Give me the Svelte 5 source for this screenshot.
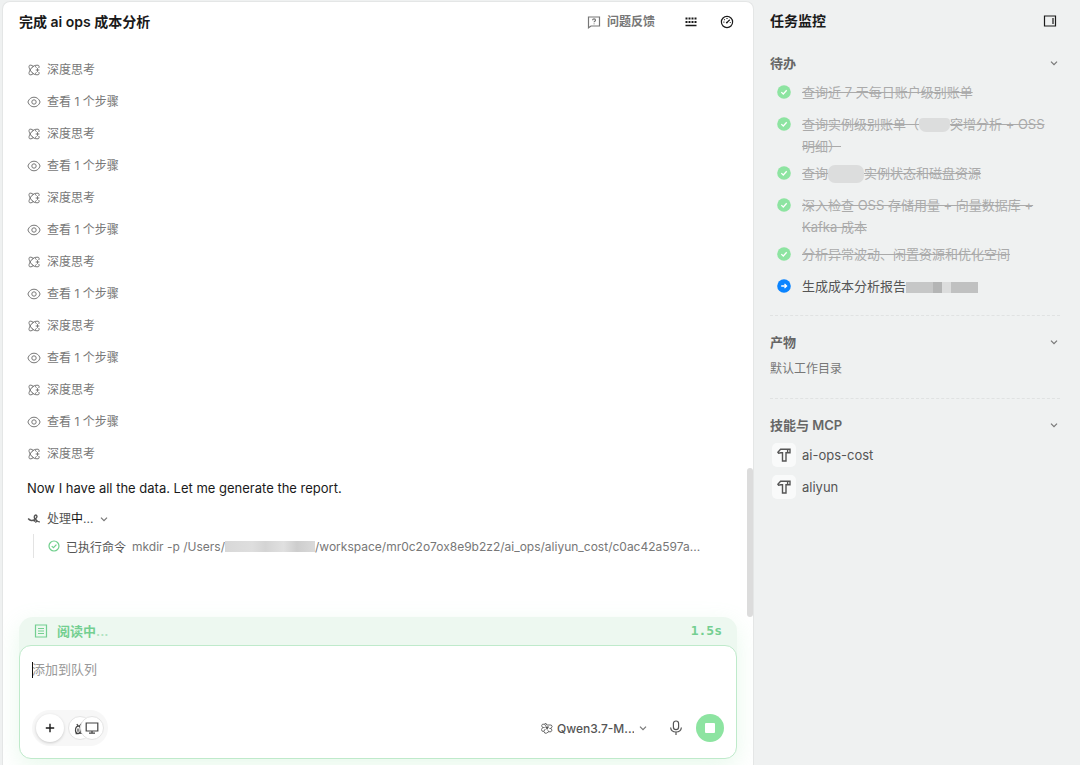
<script lang="ts">
  type TodoState = "done" | "active";

  interface TodoPart {
    text?: string;
    mask?: "small" | "medium" | "wide";
  }

  interface Todo {
    state: TodoState;
    parts: TodoPart[];
  }

  const steps = Array.from({ length: 13 }, (_, i) =>
    i % 2 === 0 ? "think" : "view",
  );

  const todos: Todo[] = [
    { state: "done", parts: [{ text: "查询近 7 天每日账户级别账单" }] },
    {
      state: "done",
      parts: [
        { text: "查询实例级别账单（" },
        { mask: "small" },
        { text: "突增分析 + OSS " },
        { text: "明细）" },
      ],
    },
    {
      state: "done",
      parts: [{ text: "查询" }, { mask: "medium" }, { text: "实例状态和磁盘资源" }],
    },
    {
      state: "done",
      parts: [{ text: "深入检查 OSS 存储用量 + 向量数据库 + Kafka 成本" }],
    },
    { state: "done", parts: [{ text: "分析异常波动、闲置资源和优化空间" }] },
    { state: "active", parts: [{ text: "生成成本分析报告" }, { mask: "wide" }] },
  ];

  const skills = ["ai-ops-cost", "aliyun"];

  let draft = $state("");
  let model = $state("qwen");
</script>

{#snippet chevron()}
  <svg class="chevron" viewBox="0 0 10 10" aria-hidden="true">
    <path d="M2 3.6 5 6.6 8 3.6" />
  </svg>
{/snippet}

<div class="app">
  <main class="panel">
    <header class="topbar">
      <h1>完成 ai ops 成本分析</h1>
      <div class="actions">
        <button class="feedback" type="button">
          <svg class="icon" viewBox="0 0 14 14" aria-hidden="true">
            <path d="M1.5 2h11v9H4L1.5 12.800z" />
            <path d="M5.6 5.2c0-1.8 2.9-1.7 2.9 0 0 1-1.4 1-1.4 2.1M7.1 8.4v.9" />
          </svg>
          <span>问题反馈</span>
        </button>
        <button class="icon-btn" type="button" aria-label="快捷键">
          <svg class="icon" viewBox="0 0 14 14" aria-hidden="true">
            <path class="dots" d="M1.5 3.5h12M1.5 7h12" />
            <path class="heavy" d="M1.5 10.5h11" />
          </svg>
        </button>
        <button class="icon-btn" type="button" aria-label="用量">
          <svg class="icon" viewBox="0 0 14 14" aria-hidden="true">
            <circle cx="7" cy="7" r="5.6" />
            <path d="M6.8 7.6 9.8 4.8M3.4 7.2h1M7 3v1M4.2 4.4l.6.6M9.8 7.5h.9" />
            <circle class="solid" cx="6.8" cy="7.6" r=".9" />
          </svg>
        </button>
      </div>
    </header>

    <section class="thread">
      <ul class="steps">
        {#each steps as step}
          <li>
            {#if step === "think"}
              <svg class="step-icon" viewBox="0 0 14 14" aria-hidden="true">
                <path
                  d="M6.5 3.500C5 2 2.500 1.700 2.200 2.700c-.5 1.300 0 2.600 1 4.300-1 1.700-1.500 3-1 4.300.4 1 2.800.7 4.300-.8M5 4.700C5.500 3.200 8 2 11 2.200c1.200.2 1.400 1.300.8 2.800M5 9.300c.5 1.500 3 2.700 6 2.500 1.200-.2 1.400-1.300.8-2.800M6.500 3.500C4.800 4.400 3.800 5.500 3.200 7c.6 1.500 1.600 2.600 3.300 3.500M8 3.300 9.600 4.600M8 10.700 9.600 9.400M10.500 5.200v3.600M8.700 7h3.600"
                />
              </svg>
              <span>深度思考</span>
            {:else}
              <svg class="step-icon" viewBox="0 0 14 14" aria-hidden="true">
                <path d="M.9 7C2 3.800 4.300 2.200 7 2.200S12 3.800 13.100 7C12 10.200 9.700 11.800 7 11.800S2 10.200.9 7z" />
                <circle cx="7" cy="7" r="2.200" />
              </svg>
              <span>查看 1 个步骤</span>
            {/if}
          </li>
        {/each}
      </ul>

      <p class="message">Now I have all the data. Let me generate the report.</p>

      <button class="processing" type="button" aria-expanded="true">
        <svg class="step-icon" viewBox="0 0 14 14" aria-hidden="true">
          <path
            class="bold"
            d="M1.200 6.500C2.700 8.800 5.500 9 7.600 7.600c2.200-1.500 2.900-3.300 2-4.200-.9-.8-2.400.1-2.300 1.900 0 .9.400 1.500 1 1.800M7.300 9.800c0-1.700 1.200-2.500 2-1.900.9.700-.1 2.300-1.100 2M9.400 8c.8 1.400 1.800 2 3.500 1.900"
          />
        </svg>
        <span>处理<b>中</b>...</span>
        {@render chevron()}
      </button>

      <div class="command">
        <svg class="check-icon" viewBox="0 0 12 12" aria-hidden="true">
          <circle cx="6" cy="6" r="5" />
          <path d="M3.700 6.100 5.500 7.700 8.400 4.600" />
        </svg>
        <span class="command-label">已执行命令</span>
        <code>
          <span>mkdir -p /Users/</span><span class="path-mask"></span><span
            >/workspace/mr0c2o7ox8e9b2z2/ai_ops/aliyun_cost/c0ac42a597a...</span>
        </code>
      </div>
      <div class="scroll-thumb"></div>
    </section>

    <form class="composer" onsubmit={(e) => e.preventDefault()}>
      <div class="status" role="status">
        <svg class="icon" viewBox="0 0 14 14" aria-hidden="true">
          <path d="M1.500 1h11v12h-11zM4 4.500h6M4 7h6M4 9.500h6" />
        </svg>
        <span class="status-text">阅读中<i>...</i></span>
        <span class="elapsed">1.5s</span>
      </div>
      <div class="input-box">
        <div class="entry">
          <textarea
            bind:value={draft}
            rows="2"
            placeholder="添加到队列"
            aria-label="添加到队列"
          ></textarea>
          <span class="caret"></span>
        </div>
        <div class="toolbar">
          <div class="tools">
            <button class="add" type="button" aria-label="添加">
              <svg viewBox="0 0 10 10" aria-hidden="true">
                <path d="M5 .8v8.400M.8 5h8.400" />
              </svg>
            </button>
            <div class="stack">
              <button type="button" aria-label="技能">
                <svg viewBox="0 0 14 14" aria-hidden="true">
                  <path
                    d="M5.500 5.200C3.800 5.200 2.500 7 2.500 9.300S3.700 12.600 5 12.600 7.500 11.400 7.500 9.300 6.700 5.200 5.500 5.200zM7.300 6v5.400c0 .8.700 1.200 1.600 1M6.300 5.200 9.500 1.600M3.800 3.200 5.500 5.200M5 7.500v3.300M2.600 12.600h2"
                  />
                </svg>
              </button>
              <button type="button" aria-label="本机">
                <svg viewBox="0 0 14 14" aria-hidden="true">
                  <path d="M1.200 2h11.600v8H1.200zM7 10v2.200M4 12.200h6" />
                </svg>
              </button>
            </div>
          </div>
          <div class="send-tools">
            <label class="model">
              <svg class="model-logo" viewBox="0 0 14 14" aria-hidden="true">
                <path
                  d="M5.400 1.200 6.700 3.500H12l1 1.800-1.300 2.200 1.100 2-1.100 1.900H9L6.400 13H4.500L3.300 10.900 1.300 10.700.5 8.800 1.900 6.500.7 4.400l1-1.800H4.300zM4.300 2.600 5.400 4.600M1.900 6.500h2.400M3.300 10.900 5 8.200M11.700 7.500H9.800M9 11.400 8 9.600"
                />
                <path class="solid" d="M4.700 5.200h4.800L7.100 9.400z" />
              </svg>
              <select bind:value={model} aria-label="模型">
                <option value="qwen">Qwen3.7-M...</option>
              </select>
              {@render chevron()}
            </label>
            <button class="mic" type="button" aria-label="语音输入">
              <svg viewBox="0 0 16 16" aria-hidden="true">
                <rect x="5.400" y="1" width="5.200" height="8.600" rx="2.600" />
                <path d="M2.600 7.500C2.900 10.400 5 12 8 12s5.100-1.600 5.400-4.500M8 12v3" />
              </svg>
            </button>
            <button class="stop" type="button" aria-label="停止">
              <span></span>
            </button>
          </div>
        </div>
      </div>
    </form>
  </main>

  <aside class="monitor">
    <header class="monitor-head">
      <h2>任务监控</h2>
      <button class="icon-btn" type="button" aria-label="收起侧栏">
        <svg class="icon" viewBox="0 0 14 14" aria-hidden="true">
          <path d="M1.500 2h11v10h-11zM10 4v6" />
        </svg>
      </button>
    </header>

    <section class="group">
      <button class="group-head" type="button" aria-expanded="true">
        <span>待办</span>
        {@render chevron()}
      </button>
      <ul class="todos">
        {#each todos as todo}
          <li class={todo.state}>
            <svg class="todo-icon" viewBox="0 0 14 14" aria-hidden="true">
              <circle cx="7" cy="7" r="6.800" />
              {#if todo.state === "done"}
                <path d="M4.300 7.100 6.300 9 9.700 5.300" />
              {:else}
                <path d="M4.200 7h5.400M7.500 4.900 9.600 7 7.500 9.100" />
              {/if}
            </svg>
            <span class="todo-text">
              {#each todo.parts as part}{#if part.mask}<span class={`mask ${part.mask}`}></span>{:else}<span>{part.text}</span>{/if}{/each}
            </span>
          </li>
        {/each}
      </ul>
    </section>

    <section class="group outputs">
      <button class="group-head" type="button" aria-expanded="true">
        <span>产物</span>
        {@render chevron()}
      </button>
      <p class="workdir">默认工作目录</p>
    </section>

    <section class="group">
      <button class="group-head" type="button" aria-expanded="true">
        <span>技能与 MCP</span>
        {@render chevron()}
      </button>
      <ul class="skills">
        {#each skills as skill}
          <li>
            <span class="skill-icon">
              <svg viewBox="0 0 14 14" aria-hidden="true">
                <path d="M.9 4.200 3.600 1.200H13v3.600H9V13H5.500V4.800H3.800L1.600 5.200zM10.600 1.200v3.600" />
              </svg>
            </span>
            <span>{skill}</span>
          </li>
        {/each}
      </ul>
    </section>
  </aside>
</div>

<style>
  :global(body) {
    background: #eff1f1;
  }
  .app {
    display: grid;
    grid-template-columns: minmax(0, 1fr) 326px;
    min-height: 100vh;
    box-sizing: border-box;
    padding: 1px 0 0 2px;
    font-family: Inter, "Noto Sans CJK SC", sans-serif;
    font-size: 13px;
    color: #1a1a1a;
  }
  h1,
  h2,
  p,
  ul {
    margin: 0;
    padding: 0;
    list-style: none;
  }
  button,
  select,
  textarea {
    margin: 0;
    padding: 0;
    border: 0;
    background: none;
    font: inherit;
    color: inherit;
  }
  svg {
    display: block;
    flex: none;
    fill: none;
    stroke: currentColor;
    stroke-width: 1.2;
  }
  svg .solid {
    fill: currentColor;
    stroke: none;
  }
  .icon {
    width: 14px;
    height: 14px;
  }
  .chevron {
    width: 10px;
    height: 10px;
    color: #777;
  }
  .dots {
    stroke-width: 2;
    stroke-dasharray: 2 1;
  }
  .heavy {
    stroke-width: 1.6;
  }

  .panel {
    display: flex;
    flex-direction: column;
    box-sizing: border-box;
    border: 1px solid #e4e6e6;
    border-bottom: 0;
    border-radius: 8px 8px 0 0;
    background: #fff;
    overflow: hidden;
  }
  .topbar {
    display: flex;
    align-items: center;
    justify-content: space-between;
    height: 40px;
    padding: 0 19px 0 16px;
  }
  h1,
  h2 {
    font-size: 14px;
    line-height: 20px;
    font-weight: 600;
  }
  .actions {
    display: flex;
    align-items: center;
    gap: 22px;
  }
  .feedback {
    display: flex;
    align-items: center;
    gap: 6px;
    margin-right: 7px;
    font-size: 12px;
    line-height: 20px;
    font-weight: 600;
    color: #777;
  }

  .thread {
    position: relative;
    flex: 1;
    padding: 12px 50px 24px 24px;
  }
  .steps li {
    display: flex;
    align-items: center;
    gap: 6px;
    height: 32px;
    font-size: 12px;
    line-height: 16px;
    color: #777;
  }
  .step-icon {
    width: 14px;
    height: 14px;
    stroke-width: 1;
  }
  .bold {
    stroke-width: 1.4;
  }
  .message {
    margin-top: 7px;
    line-height: 22px;
  }
  .processing {
    display: flex;
    align-items: center;
    gap: 6px;
    margin-top: 10px;
    font-size: 12px;
    line-height: 20px;
    color: #555;
  }
  .processing b {
    font-weight: 400;
    color: #111;
  }
  .command {
    display: flex;
    align-items: center;
    gap: 6px;
    height: 24px;
    margin: 5px 0 0 6px;
    padding-left: 14px;
    border-left: 1px solid #e3e3e3;
    font-size: 12px;
    white-space: nowrap;
  }
  .check-icon {
    width: 12px;
    height: 12px;
    color: #6fcf8c;
  }
  .command-label {
    color: #555;
  }
  code {
    display: flex;
    align-items: center;
    min-width: 0;
    font-family: inherit;
    color: #777;
    overflow: hidden;
  }
  .path-mask {
    flex: none;
    width: 90px;
    height: 11px;
    background: linear-gradient(90deg, #d8d8d8, #dedede 30%, #d4d4d4 45%, #e0e0e0 65%, #cdcdcd 80%, #dadada);
  }
  .scroll-thumb {
    position: absolute;
    right: 0;
    bottom: 0;
    width: 6px;
    height: 149px;
    border-radius: 3px;
    background: #dcdcdc;
  }

  .composer {
    margin: 0 16px 6px;
    border-radius: 14px;
    background: #edf8f0;
    box-shadow: 0 8px 24px rgba(140, 225, 160, 0.2);
  }
  .status {
    display: flex;
    align-items: center;
    gap: 9px;
    height: 28px;
    padding: 0 15px;
    line-height: 18px;
    font-weight: 600;
    color: #74cf91;
  }
  .status-text {
    flex: 1;
  }
  .status i {
    font-style: normal;
    opacity: 0.5;
  }
  .elapsed {
    font-family: "DejaVu Sans Mono", monospace;
  }
  .input-box {
    border: 1px solid #bfeacb;
    border-radius: 12px;
    background: #fff;
  }
  .entry {
    position: relative;
    padding: 12px 12px 0;
  }
  textarea {
    display: block;
    width: 100%;
    height: 44px;
    line-height: 22px;
    resize: none;
    outline: none;
  }
  textarea::placeholder {
    color: #999;
    opacity: 1;
  }
  .caret {
    position: absolute;
    top: 16px;
    left: 12px;
    width: 1px;
    height: 16px;
    background: #111;
  }
  .toolbar {
    display: flex;
    align-items: center;
    justify-content: space-between;
    padding: 8px 12px 12px;
  }
  .tools {
    display: flex;
    align-items: center;
    gap: 4px;
    padding: 4px;
    border-radius: 18px;
    background: #f7f7f7;
  }
  .add,
  .stack button {
    display: grid;
    place-items: center;
    border-radius: 50%;
    background: #fff;
  }
  .add {
    width: 28px;
    height: 28px;
    box-shadow: 0 1px 3px rgba(0, 0, 0, 0.18);
  }
  .add svg {
    width: 10px;
    height: 10px;
    stroke-width: 1.4;
  }
  .stack {
    display: flex;
  }
  .stack button {
    box-sizing: border-box;
    width: 24px;
    height: 24px;
    border: 1px solid #e4e4e4;
    color: #444;
  }
  .stack button + button {
    margin-left: -12px;
  }
  .stack svg {
    width: 14px;
    height: 14px;
  }
  .send-tools {
    display: flex;
    align-items: center;
    gap: 12px;
  }
  .model {
    display: flex;
    align-items: center;
    gap: 4px;
    margin-right: 8px;
    font-size: 12px;
    font-weight: 500;
    color: #555;
  }
  .model-logo {
    width: 12px;
    height: 12px;
    stroke-width: 1;
  }
  .model select {
    width: 77px;
    appearance: none;
    outline: none;
  }
  .mic svg {
    width: 16px;
    height: 16px;
    color: #555;
    stroke-width: 1.2;
  }
  .stop {
    display: grid;
    place-items: center;
    width: 28px;
    height: 28px;
    border-radius: 50%;
    background: #8de4a1;
  }
  .stop span {
    width: 10px;
    height: 10px;
    border-radius: 1px;
    background: #fff;
  }

  .monitor {
    padding: 0 20px 0 16px;
    color: #555;
  }
  .monitor-head {
    display: flex;
    align-items: center;
    justify-content: space-between;
    height: 40px;
    padding-right: 3px;
    color: #1a1a1a;
  }
  .group {
    padding: 15px 0 13px;
  }
  .monitor-head + .group {
    padding-top: 11px;
  }
  .group + .group {
    border-top: 1px dashed #e0e2e2;
  }
  .group-head {
    display: flex;
    align-items: center;
    justify-content: space-between;
    width: 100%;
    height: 22px;
    margin-bottom: 7px;
    padding-right: 1px;
    line-height: 18px;
    font-weight: 600;
    color: #666;
  }
  .todos {
    display: flex;
    flex-direction: column;
    gap: 5px;
    padding: 0 7px;
  }
  .todos li {
    display: flex;
    align-items: flex-start;
    gap: 11px;
    min-height: 27px;
    line-height: 22px;
  }
  .done .todo-text {
    color: #aaa;
    text-decoration: line-through;
  }
  .todo-icon {
    width: 14px;
    height: 14px;
    margin-top: 4px;
    stroke: #fff;
    stroke-width: 1.3;
  }
  .todo-icon circle {
    fill: #8de4a1;
    stroke: none;
  }
  .active .todo-icon circle {
    fill: #0a84ff;
  }
  .mask {
    display: inline-block;
    vertical-align: middle;
    background: #dcdddd;
  }
  .small {
    width: 31px;
    height: 14px;
    border-radius: 4px 4px 7px 7px;
  }
  .medium {
    width: 36px;
    height: 18px;
    border-radius: 7px;
  }
  .wide {
    width: 72px;
    height: 11px;
    background: linear-gradient(90deg, #c6c7c7 38%, #b4b5b5 38% 50%, #dcdddd 50% 63%, #c0c1c1 63%);
  }
  .outputs {
    padding-bottom: 20px;
  }
  .workdir {
    font-size: 12px;
    line-height: 18px;
    color: #777;
  }
  .skills {
    display: flex;
    flex-direction: column;
    gap: 8px;
    padding-left: 2px;
  }
  .skills li {
    display: flex;
    align-items: center;
    gap: 6px;
  }
  .skill-icon {
    display: grid;
    place-items: center;
    width: 24px;
    height: 24px;
    border-radius: 5px;
    background: #f9fafa;
  }
  .skill-icon svg {
    width: 14px;
    height: 14px;
    stroke-width: 1.4;
  }
</style>
